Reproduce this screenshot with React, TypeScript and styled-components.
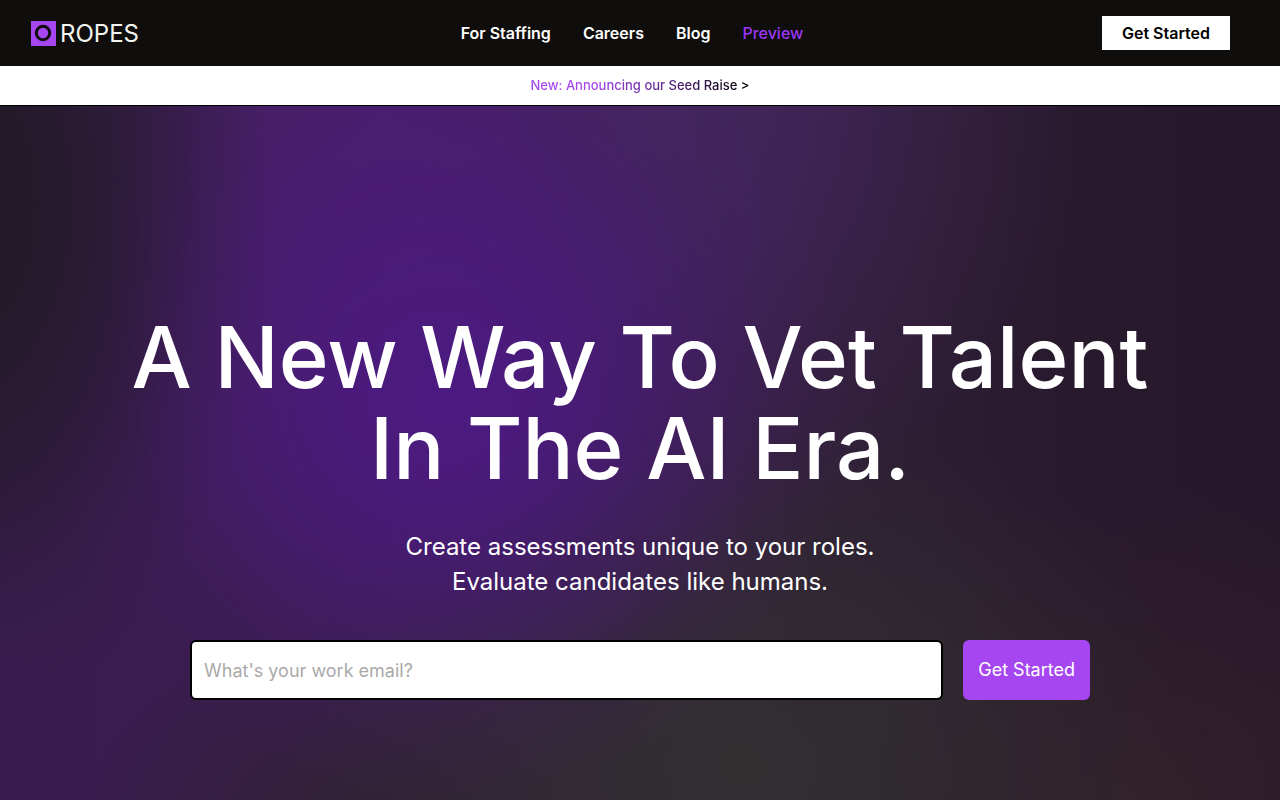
import React from "react";
import styled, { createGlobalStyle } from "styled-components";

const GlobalStyle = createGlobalStyle`
  *, *::before, *::after { box-sizing: border-box; }
  body {
    margin: 0;
    background: #0f0e0c;
    color: #fff;
    font-family: Inter, "Liberation Sans", sans-serif;
  }
`;

const Page = styled.div`
  display: flex;
  flex-direction: column;
  min-height: 100vh;
`;

const Header = styled.header`
  display: flex;
  align-items: center;
  justify-content: space-between;
  padding: 16px 50px 16px 30px;
  background: #0f0e0c;
`;

const LogoLink = styled.a`
  display: flex;
  align-items: center;
  gap: 4px;
  width: 132px;
  color: #f4f4f0;
  font-size: 24px;
  line-height: 33px;
  text-decoration: none;
`;

const LogoMark = styled.svg`
  display: block;
  width: 26px;
  height: 26px;
`;

const Nav = styled.nav`
  display: flex;
  gap: 32px;
`;

const NavLink = styled.a<{ $accent?: boolean }>`
  color: ${(p) => (p.$accent ? "#9d36f5" : "#fff")};
  font-size: 16px;
  font-weight: ${(p) => (p.$accent ? 500 : 600)};
  line-height: 24px;
  text-decoration: none;
`;

const HeaderButton = styled.button`
  height: 34px;
  padding: 0 20px;
  border: 0;
  background: #fff;
  color: #000;
  font: 600 16px/24px Inter, "Liberation Sans", sans-serif;
  cursor: pointer;
`;

const Banner = styled.div`
  display: flex;
  justify-content: center;
  padding: 9px 16px;
  border-bottom: 1px solid #000;
  background: #fff;
`;

const BannerLink = styled.a`
  background: linear-gradient(90deg, #a546f0 0%, #a546f0 30%, #000 100%);
  background-clip: text;
  -webkit-background-clip: text;
  color: transparent;
  font-size: 13px;
  font-weight: 500;
  line-height: 21px;
  text-decoration: none;
`;

const Hero = styled.main`
  display: flex;
  flex: 1;
  flex-direction: column;
  align-items: center;
  padding: 206px 40px 100px;
  background:
    radial-gradient(ellipse 25% 75% at -4% 14%, #1f1a21 0%, #1f1a22d9 25%, #1f1a2480 55%, #1f1a2426 80%, #1f1a2400 100%),
    radial-gradient(ellipse 32% 58% at 35% 42%, #4c1a82 0%, #4b1a7fd9 25%, #4a1a7a80 55%, #4a1b7626 80%, #4a1b7400 100%),
    radial-gradient(ellipse 24% 75% at 30% 5%, #4a1f6c 0%, #4a1f6ccc 35%, #48206866 65%, #48206800 100%),
    radial-gradient(ellipse 34% 65% at 51% 0%, #44265e 0%, #42255ccc 35%, #40245666 65%, #40245600 100%),
    radial-gradient(ellipse 36% 55% at 58% 95%, #322f31 0%, #312d31cc 35%, #302b3066 70%, #302b3000 100%),
    radial-gradient(ellipse 30% 45% at 90% 100%, #32202a 0%, #32202a80 50%, #32202a00 100%),
    radial-gradient(ellipse 24% 32% at 30% 106%, #2f2134 0%, #2f213480 50%, #2f213400 100%),
    linear-gradient(90deg, #3b1c50 0%, #3a1d4c 30%, #34203c 55%, #2c1d32 72%, #28192d 85%, #26172a 100%);
`;

const Title = styled.h1`
  margin: 0;
  font-size: 85px;
  font-weight: 500;
  line-height: 91px;
  text-align: center;
`;

const Subtitle = styled.p`
  margin: 35px 0 0;
  font-size: 24px;
  font-weight: 400;
  line-height: 35px;
  text-align: center;
`;

const SignupForm = styled.form`
  display: flex;
  gap: 20px;
  width: 100%;
  max-width: 900px;
  margin-top: 41px;
`;

const EmailInput = styled.input`
  flex: 1;
  min-width: 0;
  height: 60px;
  padding: 0 12px;
  border: 2px solid #000;
  border-radius: 6px;
  background: #fff;
  color: #000;
  font: 400 18px/24px Inter, "Liberation Sans", sans-serif;

  &::placeholder {
    color: #a9a9a9;
    opacity: 1;
  }
`;

const SubmitButton = styled.button`
  height: 60px;
  padding: 0 15px;
  border: 0;
  border-radius: 6px;
  background: #a546f0;
  color: #fff;
  font: 400 18px/24px Inter, "Liberation Sans", sans-serif;
  cursor: pointer;
`;

const navItems = [
  { label: "For Staffing", accent: false },
  { label: "Careers", accent: false },
  { label: "Blog", accent: false },
  { label: "Preview", accent: true },
];

export default function App() {
  return (
    <Page>
      <GlobalStyle />
      <Header>
        <LogoLink href="#">
          <LogoMark viewBox="0 0 26 26" aria-hidden="true">
            <rect x="1" y="1" width="25" height="25" fill="#a546f0" />
            <circle cx="13" cy="13" r="6.7" fill="none" stroke="#0f0e0c" strokeWidth="3" />
          </LogoMark>
          ROPES
        </LogoLink>
        <Nav>
          {navItems.map((item) => (
            <NavLink key={item.label} href="#" $accent={item.accent}>
              {item.label}
            </NavLink>
          ))}
        </Nav>
        <HeaderButton type="button">Get Started</HeaderButton>
      </Header>
      <Banner>
        <BannerLink href="#">New: Announcing our Seed Raise &gt;</BannerLink>
      </Banner>
      <Hero>
        <Title>
          A New Way To Vet Talent
          <br />
          In The AI Era.
        </Title>
        <Subtitle>
          Create assessments unique to your roles.
          <br />
          Evaluate candidates like humans.
        </Subtitle>
        <SignupForm onSubmit={(e) => e.preventDefault()}>
          <EmailInput type="email" aria-label="Work email" placeholder="What's your work email?" />
          <SubmitButton type="submit">Get Started</SubmitButton>
        </SignupForm>
      </Hero>
    </Page>
  );
}
